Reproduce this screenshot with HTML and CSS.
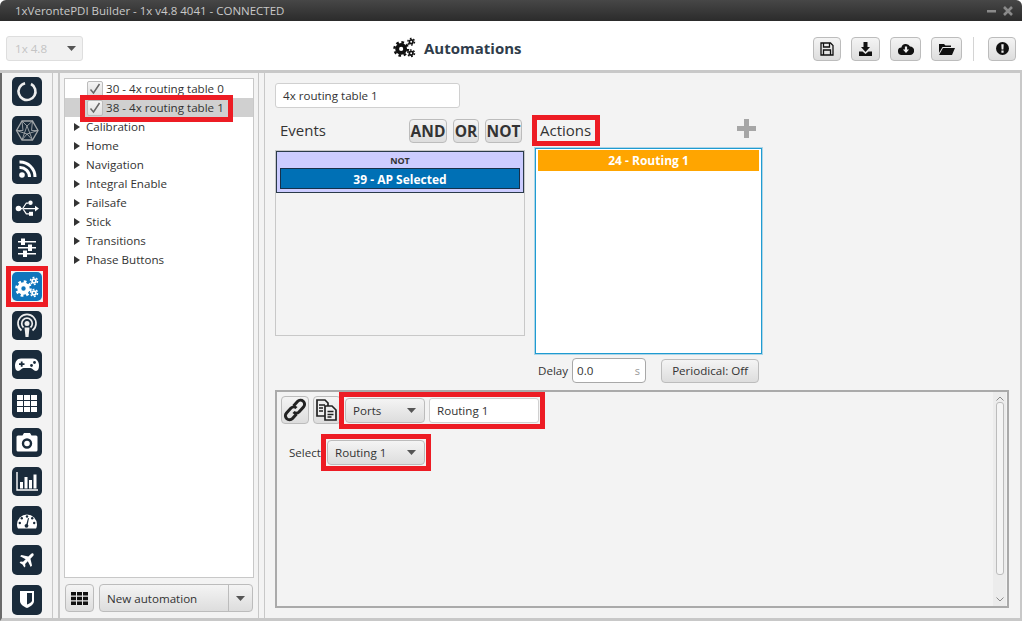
FILE: index.html
```html
<!DOCTYPE html>
<html>
<head>
    <title>1xVerontePDI Builder</title>
    <link rel="stylesheet" href="styles.css">
</head>
<body>
    <svg class="defs" width="0" height="0">
        <symbol id="gears" viewBox="0 0 24 22">
            <g fill="none" stroke="currentColor">
                <circle cx="8.500" cy="12.500" r="4.200" stroke-width="4"/>
                <circle cx="8.500" cy="12.500" r="7" stroke-width="2.600" stroke-dasharray="2.750 2.750"/>
                <circle cx="19" cy="5" r="1.900" stroke-width="1.800"/>
                <circle cx="19" cy="5" r="3.500" stroke-width="1.500" stroke-dasharray="1.830 1.830"/>
                <circle cx="19" cy="17" r="1.900" stroke-width="1.800"/>
                <circle cx="19" cy="17" r="3.500" stroke-width="1.500" stroke-dasharray="1.830 1.830"/>
            </g>
        </symbol>
        <symbol id="caret" viewBox="0 0 9 5">
            <path d="M0 0h9L4.500 5z" fill="currentColor"/>
        </symbol>
        <symbol id="tick" viewBox="0 0 16 16">
            <path d="M3.500 8.500l3 3.500 6-9" fill="none" stroke="#666" stroke-width="1.500"/>
        </symbol>
    </svg>

    <div class="window">
        <div class="titlebar">
            <span class="title-text">1xVerontePDI Builder - 1x v4.8 4041 - CONNECTED</span>
            <svg class="win-btns" width="29" height="10" viewBox="0 0 29 10">
                <path d="M0 4h9v2.500H0z" fill="#8a8a8a"/>
                <path d="M17 1l8 8M25 1l-8 8" stroke="#8a8a8a" stroke-width="2.600"/>
            </svg>
        </div>

        <div class="toolbar">
            <div class="version-select">
                <span>1x 4.8</span>
                <svg class="caret" width="9" height="5"><use href="#caret"/></svg>
            </div>
            <div class="page-title">
                <svg class="title-gears" width="23" height="21"><use href="#gears"/></svg>
                <span>Automations</span>
            </div>
            <div class="tool-btns">
                <button class="btn tool w28">
                    <svg width="14" height="14" viewBox="0 0 14 14"><path d="M1 1h9.500L13 3.500V13H1zM3.500 1v4h6V1M3.500 13V8h7v5" fill="none" stroke="#111" stroke-width="1.300"/></svg>
                </button>
                <button class="btn tool w29">
                    <svg width="15" height="14" viewBox="0 0 15 14"><path d="M5.500 0h4v5H12L7.500 10 3 5h2.500zM1 9.500h3.500l3 2.500 3-2.500H14V14H1z" fill="#111"/></svg>
                </button>
                <button class="btn tool w31">
                    <svg width="16" height="12" viewBox="0 0 16 12"><path d="M4 12a3.700 3.700 0 0 1-.6-7.400A4.600 4.600 0 0 1 12 3.600 4.200 4.200 0 0 1 12 12z" fill="#111"/><path d="M6.900 3.500h2.200v3h2L8 10 4.900 6.500h2z" fill="#eee"/></svg>
                </button>
                <button class="btn tool w31">
                    <svg width="16" height="12" viewBox="0 0 16 12"><path d="M0 1h5l1.500 1.500H12V4H3.500L0 10zM4 5h12l-3 7H0z" fill="#111"/></svg>
                </button>
                <div class="tool-sep"></div>
                <button class="btn tool w28">
                    <svg width="13" height="13" viewBox="0 0 13 13"><circle cx="6.500" cy="6.500" r="6.500" fill="#111"/><path d="M5.300 2.200h2.400l-.3 5.300H5.600zM5.400 8.600h2.200v2.100H5.400z" fill="#eee"/></svg>
                </button>
            </div>
        </div>

        <div class="main">
            <div class="sidebar">
                <div class="side-icon">
                    <svg viewBox="0 0 30 29"><circle cx="15" cy="14.500" r="8.500" fill="none" stroke="#eee" stroke-width="2.600" stroke-dasharray="47 6.400" transform="rotate(-62 15 14.500)"/></svg>
                </div>
                <div class="side-icon">
                    <svg viewBox="0 0 30 29"><g fill="none" stroke="#a4a8ab" stroke-width=".9"><path d="M10 5h10.500L26 14.500 20.500 24H10L4.500 14.500z" stroke-width="1.300"/><path d="M10 5l5 5 5.500-5M15 10l-5 14M15 10l5.500 14M4.500 14.500L15 18l11-3.500M10 24l5-6 5.500 6M10 5l1 9.500H4.500M20.500 5l-1 9.500H26"/></g></svg>
                </div>
                <div class="side-icon">
                    <svg viewBox="0 0 30 29"><circle cx="10" cy="20" r="2.800" fill="#fff"/><path d="M7.500 12.500a9.500 9.500 0 0 1 10 9.500" fill="none" stroke="#fff" stroke-width="3"/><path d="M7.500 7a15 15 0 0 1 15.500 15" fill="none" stroke="#fff" stroke-width="3"/></svg>
                </div>
                <div class="side-icon">
                    <svg viewBox="0 0 30 29"><g fill="#fff"><circle cx="6.500" cy="14.500" r="2.800"/><path d="M6 14h18v1.200H6zM10 14.500l4-6h2.500v1.200h-2L11 15zM10 14.500l4 6h3v-1.200h-2.300L11 14z"/><circle cx="18.500" cy="8.800" r="2.200"/><rect x="17" y="17.800" width="4" height="4"/><path d="M23 11.800l4 2.800-4 2.800z"/></g></svg>
                </div>
                <div class="side-icon">
                    <svg viewBox="0 0 30 29"><g fill="#fff"><rect x="6" y="8" width="18" height="1.500"/><rect x="6" y="14" width="18" height="1.500"/><rect x="6" y="20" width="18" height="1.500"/><rect x="9" y="5.500" width="4" height="6.500"/><rect x="16" y="11.500" width="4" height="6.500"/><rect x="11" y="17.500" width="4" height="6.500"/></g></svg>
                </div>
                <div class="side-icon active">
                    <svg width="24" height="22"><use href="#gears"/></svg>
                </div>
                <div class="side-icon">
                    <svg viewBox="0 0 30 29"><g fill="none" stroke="#eee"><path d="M9.500 19.500a9 9 0 1 1 11 0" stroke-width="1.700"/><path d="M11.500 16.500a5.300 5.300 0 1 1 7 0" stroke-width="1.700"/></g><circle cx="15" cy="12.500" r="2.500" fill="#eee"/><path d="M12.500 16.500h5L16.500 26h-3z" fill="#eee"/></svg>
                </div>
                <div class="side-icon">
                    <svg viewBox="0 0 30 29"><path d="M9 8.500h12c4 0 6 3.500 6 7 0 3-1 5.500-3 5.500-2.500 0-3.500-3-5.500-3h-7c-2 0-3 3-5.500 3-2 0-3-2.500-3-5.500 0-3.500 2-7 6-7z" fill="#fff"/><path d="M7 13.200h5.500v1.800H7zM8.800 11.400h1.800v5.400H8.800z" fill="#1a2b3b"/><circle cx="19.500" cy="15.500" r="1.400" fill="#1a2b3b"/><circle cx="22.500" cy="12.500" r="1.400" fill="#1a2b3b"/></svg>
                </div>
                <div class="side-icon">
                    <svg viewBox="0 0 30 29"><g fill="#fff"><rect x="5" y="6" width="6" height="5"/><rect x="12" y="6" width="6" height="5"/><rect x="19" y="6" width="6" height="5"/><rect x="5" y="12" width="6" height="5"/><rect x="12" y="12" width="6" height="5"/><rect x="19" y="12" width="6" height="5"/><rect x="5" y="18" width="6" height="5"/><rect x="12" y="18" width="6" height="5"/><rect x="19" y="18" width="6" height="5"/></g></svg>
                </div>
                <div class="side-icon">
                    <svg viewBox="0 0 30 29"><path d="M6 7.500h4.500L12 5h6l1.500 2.500H24a1.500 1.500 0 0 1 1.500 1.500v13a1.500 1.500 0 0 1-1.500 1.500H6A1.500 1.500 0 0 1 4.500 22V9A1.500 1.500 0 0 1 6 7.500z" fill="#fff"/><circle cx="15" cy="15.500" r="4" fill="none" stroke="#1a2b3b" stroke-width="2.400"/></svg>
                </div>
                <div class="side-icon">
                    <svg viewBox="0 0 30 29"><path d="M5 5v18h21" fill="none" stroke="#fff" stroke-width="1.400"/><g fill="#fff"><rect x="8" y="15" width="3" height="6.500"/><rect x="12.500" y="10" width="3" height="11.500"/><rect x="17" y="13" width="3" height="8.500"/><rect x="21.500" y="7.500" width="3" height="14"/></g></svg>
                </div>
                <div class="side-icon">
                    <svg viewBox="0 0 30 29"><path d="M5 18.500a10 10 0 1 1 20 0c0 1.500-.4 3-1 4H6c-.6-1-1-2.500-1-4z" fill="#fff"/><g fill="#1a2b3b"><circle cx="15" cy="10.500" r="1.200"/><circle cx="9.800" cy="12.300" r="1.200"/><circle cx="20.200" cy="12.300" r="1.200"/><circle cx="7.800" cy="17" r="1.200"/><circle cx="22.200" cy="17" r="1.200"/><circle cx="14.500" cy="19.800" r="1.900"/><path d="M14 19.500l2-7.500 1 .3-1.500 7.500z"/></g></svg>
                </div>
                <div class="side-icon tall">
                    <svg viewBox="0 0 30 30"><path transform="translate(3.750 3.750) scale(.75) rotate(45 15 15)" d="M15 3c1.200 0 2 1.500 2 3v4.500l8 5V18l-8-2.500v5l2.500 2v2L15 23.500 10.500 24.500v-2l2.500-2v-5L5 18v-2.500l8-5V6c0-1.500.8-3 2-3z" fill="#fff"/></svg>
                </div>
                <div class="side-icon tall">
                    <svg viewBox="0 0 30 30"><path d="M8 6h14v10c0 3.500-3.500 5.500-7 7-3.500-1.500-7-3.500-7-7z" fill="#fff"/><path d="M15 8h5v7.500c0 1.700-2.500 3-5 4z" fill="#1a2b3b"/></svg>
                </div>
            </div>

            <div class="tree-panel">
                <div class="tree">
                    <div class="tree-row leaf"><span class="check"><svg width="16" height="16"><use href="#tick"/></svg></span>30 - 4x routing table 0</div>
                    <div class="tree-row leaf selected"><span class="check"><svg width="16" height="16"><use href="#tick"/></svg></span>38 - 4x routing table 1</div>
                    <div class="tree-row"><span class="arrow"></span>Calibration</div>
                    <div class="tree-row"><span class="arrow"></span>Home</div>
                    <div class="tree-row"><span class="arrow"></span>Navigation</div>
                    <div class="tree-row"><span class="arrow"></span>Integral Enable</div>
                    <div class="tree-row"><span class="arrow"></span>Failsafe</div>
                    <div class="tree-row"><span class="arrow"></span>Stick</div>
                    <div class="tree-row"><span class="arrow"></span>Transitions</div>
                    <div class="tree-row"><span class="arrow"></span>Phase Buttons</div>
                </div>
                <div class="tree-foot">
                    <button class="btn grid-btn">
                        <svg width="17" height="13" viewBox="0 0 17 13"><path d="M0 0h5v3.500H0zM6 0h5v3.500H6zM12 0h5v3.500h-5zM0 4.700h5v3.500H0zM6 4.700h5v3.500H6zM12 4.700h5v3.500h-5zM0 9.400h5V13H0zM6 9.400h5V13H6zM12 9.400h5V13h-5z" fill="#111"/></svg>
                    </button>
                    <div class="btn new-btn">
                        <span class="new-label">New automation</span>
                        <span class="new-arrow"><svg class="caret" width="9" height="5"><use href="#caret"/></svg></span>
                    </div>
                </div>
            </div>

            <div class="content">
                <div class="field name-field">4x routing table 1</div>

                <div class="editor">
                    <div class="events">
                        <div class="events-head">
                            <span class="heading">Events</span>
                            <button class="btn op op-and">AND</button>
                            <button class="btn op op-or">OR</button>
                            <button class="btn op op-not">NOT</button>
                        </div>
                        <div class="events-box">
                            <div class="not-block">
                                <div class="not-label">NOT</div>
                                <div class="event-item">39 - AP Selected</div>
                            </div>
                        </div>
                    </div>
                    <div class="actions">
                        <div class="actions-head">
                            <span class="heading">Actions</span>
                            <svg width="19" height="19" viewBox="0 0 19 19"><path d="M7 0h5v7h7v5h-7v7H7v-7H0V7h7z" fill="#a6a6a6"/></svg>
                        </div>
                        <div class="actions-box">
                            <div class="action-item">24 - Routing 1</div>
                        </div>
                        <div class="delay-row">
                            <span>Delay</span>
                            <div class="field delay-field"><span>0.0</span><span class="unit">s</span></div>
                            <button class="btn periodical">Periodical: Off</button>
                        </div>
                    </div>
                </div>

                <div class="detail">
                    <div class="detail-body">
                        <div class="detail-top">
                            <button class="btn icon-btn link-btn">
                                <svg width="24" height="24" viewBox="0 0 24 24"><g fill="none" stroke="#222" stroke-width="3"><path d="M10.500 8l4-4.500a4 4 0 0 1 6 5.500l-4.500 5a4 4 0 0 1-5.500 0"/><path d="M13.500 16l-4 4.500a4 4 0 0 1-6-5.500l4.500-5a4 4 0 0 1 5.500 0"/></g></svg>
                            </button>
                            <button class="btn icon-btn copy-btn">
                                <svg width="24" height="24" viewBox="0 0 24 24"><g fill="#eee" stroke="#222" stroke-width="1.700"><path d="M2 2h8l3 3v13H2z"/><path d="M10 8h7l4 4v10H10z"/></g><path d="M4 7h6M4 10h4M4 13h4M12.500 13.500h6M12.500 16.500h6M12.500 19h4" stroke="#222" stroke-width="1.300"/></svg>
                            </button>
                            <div class="btn combo ports-combo"><span>Ports</span><svg class="caret" width="9" height="5"><use href="#caret"/></svg></div>
                            <div class="field routing-field">Routing 1</div>
                        </div>
                        <div class="select-row">
                            <span>Select</span>
                            <div class="btn combo routing-combo"><span>Routing 1</span><svg class="caret" width="9" height="5"><use href="#caret"/></svg></div>
                        </div>
                    </div>
                    <div class="scrollbar">
                        <svg width="8" height="5" viewBox="0 0 8 5"><path d="M.5 4.500L4 1l3.500 3.500" fill="none" stroke="#8a8a8a"/></svg>
                        <div class="thumb"></div>
                        <svg width="8" height="5" viewBox="0 0 8 5"><path d="M.5.500L4 4 7.500.500" fill="none" stroke="#8a8a8a"/></svg>
                    </div>
                </div>
            </div>
        </div>
    </div>

    <!-- red marks drawn over the screenshot -->
    <div class="mark mark-row"></div>
    <div class="mark mark-side"></div>
    <div class="mark mark-actions"></div>
    <div class="mark mark-ports"></div>
    <div class="mark mark-select"></div>
</body>
</html>
```

FILE: styles.css
```css
* {
    box-sizing: border-box;
}

body {
    margin: 0;
    width: 1022px;
    height: 621px;
    overflow: hidden;
    position: relative;
    background: white;
    font-family: "Open Sans", sans-serif;
    font-size: 11.6px;
    color: #333;
}

.defs {
    position: absolute;
}

.window {
    height: 621px;
    display: flex;
    flex-direction: column;
}

.titlebar {
    height: 21px;
    flex: none;
    display: flex;
    align-items: center;
    justify-content: space-between;
    padding: 0 6px 0 15px;
    background: linear-gradient(#474747, #2b2b2b);
    border-radius: 6px 6px 0 0;
    color: #c9c9c9;
}

.title-text {
    font-size: 11.5px;
}

.toolbar {
    height: 52px;
    flex: none;
    display: flex;
    align-items: center;
    padding: 6px 6px 0;
    border-bottom: 3px solid #c8c8c8;
    background: white;
}

.version-select {
    width: 77px;
    height: 25px;
    display: flex;
    align-items: center;
    justify-content: space-between;
    padding: 0 6px 0 8px;
    background: #f1f1f1;
    border: 1px solid #dedede;
    border-radius: 3px;
    color: #c4c4c4;
}

.page-title {
    margin-left: 310px;
    margin-bottom: 2px;
    display: flex;
    align-items: center;
    gap: 8px;
    font-size: 15px;
    font-weight: bold;
    color: #2f3c4a;
}

.title-gears {
    color: #111;
}

.tool-btns {
    margin-left: auto;
    display: flex;
    align-items: center;
    gap: 10px;
}

.btn {
    display: flex;
    align-items: center;
    padding: 0;
    font-family: inherit;
    font-size: 11.6px;
    color: #333;
    background: linear-gradient(#f4f4f4, #dddddd);
    border: 1px solid #bcbcbc;
    border-radius: 4px;
}

.tool {
    height: 24px;
    justify-content: center;
}

.w28 { width: 28px; }
.w29 { width: 29px; }
.w31 { width: 31px; }

.tool-sep {
    width: 1px;
    height: 24px;
    margin: 0 4px 0 1px;
    background: #d4d4d4;
}

.caret {
    color: #555;
}

.main {
    flex: 1;
    display: flex;
    background: #f3f3f3;
    border-left: 2px solid #6a6a6a;
    border-right: 2px solid #c8c8c8;
    border-bottom: 3px solid #c8c8c8;
}

.sidebar {
    width: 51px;
    flex: none;
    display: flex;
    flex-direction: column;
    gap: 10px;
    padding: 4px 0 0 10px;
    border-right: 1px solid #c8c8c8;
}

.side-icon {
    width: 30px;
    height: 29px;
    flex: none;
    display: flex;
    align-items: center;
    justify-content: center;
    background: #1a2b3b;
    border-radius: 5px;
}

.side-icon.tall {
    height: 30px;
}

.side-icon svg {
    display: block;
}

.side-icon.active {
    background: #0f75bc;
    color: white;
}

.tree-panel {
    width: 201px;
    flex: none;
    margin-left: 5px;
    display: flex;
    flex-direction: column;
    padding: 5px 4px 6px 4px;
    border-left: 2px solid #c8c8c8;
    border-right: 1px solid #c8c8c8;
}

.tree {
    flex: 1;
    background: white;
    border: 1px solid #c8c8c8;
}

.tree-row {
    height: 19px;
    display: flex;
    align-items: center;
    gap: 6px;
    padding-left: 9px;
    white-space: nowrap;
}

.tree-row.leaf {
    gap: 3px;
    padding-left: 22px;
}

.tree-row.selected {
    background: #d0d0d0;
}

.arrow {
    width: 0;
    height: 0;
    border-left: 6px solid #333;
    border-top: 4px solid transparent;
    border-bottom: 4px solid transparent;
}

.check {
    width: 16px;
    height: 16px;
    display: flex;
    background: linear-gradient(#f4f4f4, #dedede);
    border: 1px solid #bcbcbc;
    border-radius: 2px;
}

.check svg {
    margin: -1px;
    flex: none;
}

.tree-foot {
    height: 28px;
    flex: none;
    margin-top: 6px;
    padding-left: 1px;
    display: flex;
    gap: 5px;
}

.grid-btn {
    width: 29px;
    justify-content: center;
}

.new-btn {
    width: 154px;
}

.new-label {
    flex: 1;
    padding-left: 7px;
}

.new-arrow {
    width: 24px;
    height: 100%;
    display: flex;
    align-items: center;
    justify-content: center;
    border-left: 1px solid #bcbcbc;
}

.content {
    flex: 1;
    min-width: 0;
    margin-left: 5px;
    padding: 10px 0 0 10px;
    border-left: 1px solid #c8c8c8;
}

.field {
    height: 25px;
    display: flex;
    align-items: center;
    padding-left: 7px;
    background: white;
    border: 1px solid #d0d0d0;
    border-radius: 3px;
}

.name-field {
    width: 185px;
}

.editor {
    margin-top: 11px;
    display: flex;
    gap: 10px;
}

.events {
    width: 250px;
}

.events-head {
    height: 24px;
    display: flex;
    align-items: center;
    gap: 6px;
    padding: 0 3px 0 5px;
}

.heading {
    font-size: 15px;
}

.events-head .heading {
    margin-right: auto;
    padding-bottom: 2px;
}

.op {
    height: 24px;
    justify-content: center;
    font-size: 15.5px;
    font-weight: bold;
}

.op-and { width: 38px; }
.op-or { width: 26px; }
.op-not { width: 37px; }

.events-box {
    height: 186px;
    margin-top: 7px;
    background: #f3f3f3;
    border: 1px solid #c8c8c8;
}

.not-block {
    height: 42px;
    padding: 0 3px;
    background: #ccccff;
    border: 1px solid #2a3a4a;
}

.not-label {
    height: 16px;
    line-height: 18px;
    text-align: center;
    font-size: 9px;
    font-weight: bold;
}

.event-item {
    height: 21px;
    line-height: 21px;
    text-align: center;
    font-size: 12px;
    font-weight: bold;
    color: white;
    background: #0070b5;
    border: 1px solid #17304a;
}

.actions {
    width: 227px;
}

.actions-head {
    height: 29px;
    display: flex;
    align-items: flex-start;
    justify-content: space-between;
    padding: 0 6px 0 5px;
}

.actions-head .heading {
    line-height: 22px;
}

.actions-box {
    height: 206px;
    padding: 1px 2px;
    background: white;
    border: 1px solid #1f9bd1;
    box-shadow: 0 0 0 1px rgba(42, 159, 208, 0.35);
}

.action-item {
    height: 21px;
    line-height: 21px;
    text-align: center;
    font-size: 12px;
    font-weight: bold;
    color: white;
    background: #ffa500;
}

.delay-row {
    margin-top: 4px;
    display: flex;
    align-items: center;
    padding-left: 3px;
}

.delay-field {
    width: 74px;
    margin-left: 4px;
    padding: 0 5px 0 4px;
    justify-content: space-between;
    border-color: #a8a8a8;
    border-radius: 4px;
}

.unit {
    color: #999;
    font-size: 11px;
}

.periodical {
    width: 98px;
    height: 24px;
    margin-left: 15px;
    justify-content: center;
}

.detail {
    width: 734px;
    height: 218px;
    margin-top: 7px;
    display: flex;
    background: #f3f3f3;
    border: 2px solid #aaa;
}

.detail-body {
    flex: 1;
    padding: 4px 0 0 4px;
}

.detail-top {
    display: flex;
    align-items: center;
}

.icon-btn {
    width: 28px;
    height: 28px;
    justify-content: center;
}

.copy-btn {
    margin-left: 4px;
}

.combo {
    height: 25px;
    justify-content: space-between;
    padding: 0 8px 0 7px;
}

.ports-combo {
    width: 80px;
    margin-left: 4px;
}

.routing-field {
    width: 110px;
    margin-left: 4px;
}

.select-row {
    margin-top: 16px;
    padding-left: 8px;
    display: flex;
    align-items: center;
    gap: 6px;
}

.routing-combo {
    width: 98px;
}

.scrollbar {
    width: 13px;
    margin-right: 1px;
    display: flex;
    flex-direction: column;
    align-items: center;
    justify-content: space-between;
    padding: 4px 0;
    background: #ececec;
}

.thumb {
    width: 8px;
    height: 173px;
    margin-top: 1px;
    margin-bottom: auto;
    background: #f4f4f4;
    border: 1px solid #bcbcbc;
    border-radius: 3px;
}

.mark {
    position: absolute;
    border: 5px solid #ed1c24;
}

.mark-row { left: 80px; top: 95px; width: 153px; height: 27px; }
.mark-side { left: 6px; top: 266px; width: 42px; height: 41px; }
.mark-actions { left: 532px; top: 115px; width: 68px; height: 31px; }
.mark-ports { left: 339px; top: 392px; width: 206px; height: 37px; }
.mark-select { left: 321px; top: 434px; width: 110px; height: 37px; }
```
